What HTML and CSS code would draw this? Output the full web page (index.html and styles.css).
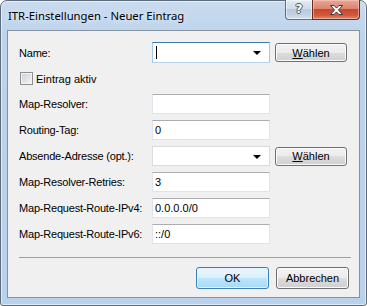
FILE: index.html
```html
<!DOCTYPE html>
<html lang="de">
<head>
    <meta charset="UTF-8">
    <title>ITR-Einstellungen - Neuer Eintrag</title>
    <link rel="stylesheet" href="styles.css">
</head>
<body>
    <div class="window">
        <div class="titlebar">
            <span class="title">ITR-Einstellungen - Neuer Eintrag</span>
            <div class="caption-buttons">
                <div class="cap-btn help"><span>?</span></div>
                <div class="cap-btn close">
                    <svg width="13" height="10" viewBox="0 0 13 10">
                        <path d="M0.5 0.5h3.6l2.4 2.6 2.4-2.6h3.6l-4 4.5 4 4.5h-3.6l-2.4-2.6-2.4 2.6h-3.6l4-4.5z" fill="#fff" stroke="#3b3b3b" stroke-width="1" stroke-linejoin="round"/>
                    </svg>
                </div>
            </div>
        </div>

        <div class="client">
            <div class="form">
                <label class="lbl">Name:</label>
                <div class="combo focused"><span class="caret"></span><span class="arrow"></span></div>
                <button class="btn"><u>W</u>ählen</button>

                <div class="check-row">
                    <span class="checkbox"></span>
                    <span>Eintrag aktiv</span>
                </div>

                <label class="lbl">Map-Resolver:</label>
                <div class="field"></div>
                <span></span>

                <label class="lbl">Routing-Tag:</label>
                <div class="field">0</div>
                <span></span>

                <label class="lbl">Absende-Adresse (opt.):</label>
                <div class="combo"><span class="arrow"></span></div>
                <button class="btn"><u>W</u>ählen</button>

                <label class="lbl">Map-Resolver-Retries:</label>
                <div class="field">3</div>
                <span></span>

                <label class="lbl">Map-Request-Route-IPv4:</label>
                <div class="field">0.0.0.0/0</div>
                <span></span>

                <label class="lbl">Map-Request-Route-IPv6:</label>
                <div class="field">::/0</div>
                <span></span>
            </div>

            <div class="separator"></div>

            <div class="actions">
                <button class="btn btn-default">OK</button>
                <button class="btn">Abbrechen</button>
            </div>
        </div>
    </div>
</body>
</html>
```

FILE: styles.css
```css
*{
    margin: 0;
    padding: 0;
    box-sizing: border-box;
}
body{
    width: 367px;
    height: 306px;
    overflow: hidden;
    background: #ffffff;
    font-family: "Liberation Sans", Arial, sans-serif;
    font-size: 11px;
    color: #000;
}
.window{
    width: 367px;
    height: 306px;
    display: flex;
    flex-direction: column;
    padding: 0 6px 7px 6px;
    background: linear-gradient(to bottom, #c9dbef, #bcd3eb 40px, #b9d1ea);
    border: 1px solid #5d6d7e;
    border-radius: 7px 7px 3px 3px;
    box-shadow: inset 0 0 0 1px rgba(255, 255, 255, 0.55);
}
.titlebar{
    height: 29px;
    display: flex;
    justify-content: space-between;
    align-items: flex-start;
}
.title{
    font-family: "Noto Sans", "Open Sans", sans-serif;
    font-size: 11.3px;
    margin: 7px 0 0 1px;
    color: #000;
    text-shadow: 0 0 6px rgba(255, 255, 255, 0.9);
}
.caption-buttons{
    display: flex;
    margin-top: -1px;
}
.cap-btn{
    height: 20px;
    display: flex;
    justify-content: center;
    align-items: center;
    border: 1px solid #5f6f80;
    border-top: none;
}
.help{
    width: 27px;
    border-radius: 0 0 0 4px;
    border-right: none;
    background: linear-gradient(to bottom, #e3ebf4, #d0dcea 45%, #b9c9dc 50%, #c6d5e5 85%, #dbe5f0);
    box-shadow: inset 0 0 0 1px rgba(255, 255, 255, 0.5);
}
.help span{
    font-family: "DejaVu Sans", sans-serif;
    font-size: 12px;
    font-weight: bold;
    color: #fff;
    text-shadow: -1px 0 #4a5564, 1px 0 #4a5564, 0 -1px #4a5564, 0 1px #4a5564;
    margin-top: -1px;
}
.close{
    width: 48px;
    border-radius: 0 0 4px 0;
    border-color: #6b2a20;
    background: linear-gradient(to bottom, #e9a796, #dc8470 45%, #c8472f 50%, #cf5a3c 80%, #e28a6c);
    box-shadow: inset 0 0 0 1px rgba(255, 220, 210, 0.45);
}
.close svg{
    display: block;
}
.client{
    flex: 1;
    background: #f0f0f0;
    border: 1px solid #84939f;
    padding: 11px 8px 0 11px;
    display: flex;
    flex-direction: column;
}
.form{
    display: grid;
    grid-template-columns: 128px 118px 72px;
    grid-template-rows: 21px 19px repeat(6, 20px);
    column-gap: 5px;
    row-gap: 6px;
    align-items: center;
}
.lbl{
    white-space: nowrap;
    letter-spacing: -0.2px;
}
.field, .combo{
    height: 20px;
    background: #fff;
    border: 1px solid #e2e3ea;
    border-top-color: #abadb3;
    padding-left: 2px;
    display: flex;
    align-items: center;
    position: relative;
}
.combo{
    border-color: #dadbdf;
}
.combo.focused{
    height: 21px;
    border-color: #3d7bad #a4c9e3 #b5d3ec #a4c9e3;
}
.caret{
    width: 1px;
    height: 13px;
    background: #000;
    margin-left: 1px;
}
.arrow{
    position: absolute;
    right: 8px;
    top: 8px;
    width: 0;
    height: 0;
    border-left: 4px solid transparent;
    border-right: 4px solid transparent;
    border-top: 4px solid #000;
}
.btn{
    height: 19px;
    font-family: "Liberation Sans", Arial, sans-serif;
    font-size: 11px;
    color: #000;
    border: 1px solid #707070;
    border-radius: 3px;
    background: linear-gradient(to bottom, #f2f2f2, #ebebeb 50%, #dddddd 50%, #cfcfcf);
    box-shadow: inset 0 0 0 1px #fbfbfb;
}
.btn u{
    text-decoration: underline;
}
.check-row{
    grid-column: 1 / 4;
    display: flex;
    align-items: center;
    gap: 3px;
}
.checkbox{
    width: 13px;
    height: 13px;
    margin-left: 1px;
    border: 1px solid #8e8f8f;
    background: linear-gradient(135deg, #cbcfd5, #f6f6f6);
    box-shadow: inset 0 0 0 1px #f4f4f4;
}
.separator{
    height: 1px;
    background: #a0a0a0;
    margin-top: 13px;
}
.actions{
    display: flex;
    justify-content: flex-end;
    gap: 7px;
    margin: 9px 2px 0 0;
}
.actions .btn{
    width: 73px;
    height: 22px;
}
.btn-default{
    border-color: #3c7fb1;
    background: linear-gradient(to bottom, #eaf6fd, #d9f0fc 50%, #bee6fd 50%, #a7d9f5);
    box-shadow: inset 0 0 0 1px #e3f4fc;
}
```
